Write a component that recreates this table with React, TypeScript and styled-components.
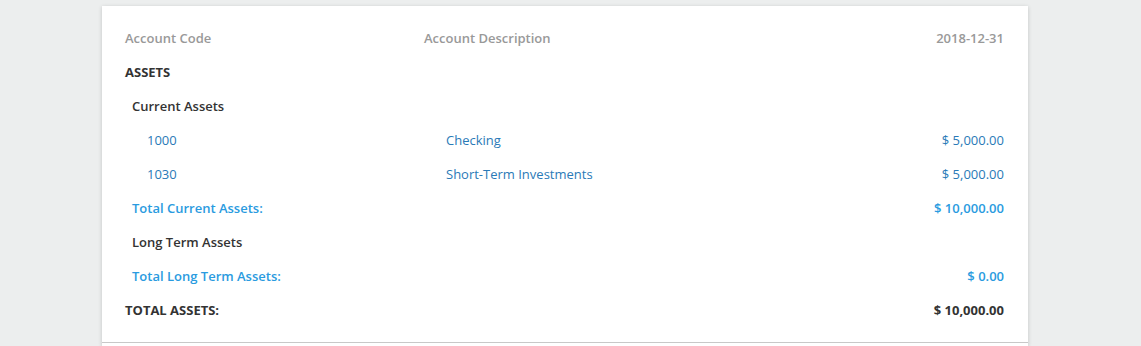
import styled, { createGlobalStyle } from 'styled-components';

const GlobalStyle = createGlobalStyle`
  body {
    margin: 0;
    background: #eceeee;
    font-family: "Open Sans", "Liberation Sans", sans-serif;
    font-size: 13px;
    color: #333;
  }
`;

const Page = styled.div`
  padding-top: 6px;
  padding-left: 102px;
`;

const Card = styled.div`
  width: 926px;
  background: #fff;
  box-shadow: 0 1px 4px rgba(0, 0, 0, 0.18);
`;

const Section = styled.div`
  padding: 15px 24px 15px 23px;
  border-bottom: 1px solid #c8c8c8;
`;

const Footer = styled.div`
  height: 3px;
`;

type Kind = 'head' | 'group' | 'sub' | 'line' | 'total' | 'grand';

const weights: Record<Kind, number> = {
  head: 600,
  group: 700,
  sub: 600,
  line: 400,
  total: 600,
  grand: 700,
};

const colors: Record<Kind, string> = {
  head: '#999',
  group: '#333',
  sub: '#333',
  line: '#2a7ab7',
  total: '#2a9be0',
  grand: '#333',
};

const Row = styled.div<{ kind: Kind }>`
  display: grid;
  grid-template-columns: 299px 1fr auto;
  align-items: center;
  height: 34px;
  font-weight: ${({ kind }) => weights[kind]};
  color: ${({ kind }) => colors[kind]};
`;

const Cell = styled.div<{ indent?: number }>`
  padding-left: ${({ indent }) => indent ?? 0}px;
  white-space: nowrap;
`;

const Amount = styled.div`
  text-align: right;
  white-space: nowrap;
`;

type Line = { code: string; name: string; amount: string };

const current: Line[] = [
  { code: '1000', name: 'Checking', amount: '$ 5,000.00' },
  { code: '1030', name: 'Short-Term Investments', amount: '$ 5,000.00' },
];

export default function App() {
  return (
    <>
      <GlobalStyle />
      <Page>
        <Card>
          <Section>
            <Row kind="head">
              <Cell>Account Code</Cell>
              <Cell>Account Description</Cell>
              <Amount>2018-12-31</Amount>
            </Row>
            <Row kind="group">
              <Cell>ASSETS</Cell>
            </Row>
            <Row kind="sub">
              <Cell indent={7}>Current Assets</Cell>
            </Row>
            {current.map((l) => (
              <Row kind="line" key={l.code}>
                <Cell indent={22}>{l.code}</Cell>
                <Cell indent={22}>{l.name}</Cell>
                <Amount>{l.amount}</Amount>
              </Row>
            ))}
            <Row kind="total">
              <Cell indent={7}>Total Current Assets:</Cell>
              <Cell />
              <Amount>$ 10,000.00</Amount>
            </Row>
            <Row kind="sub">
              <Cell indent={7}>Long Term Assets</Cell>
            </Row>
            <Row kind="total">
              <Cell indent={7}>Total Long Term Assets:</Cell>
              <Cell />
              <Amount>$ 0.00</Amount>
            </Row>
            <Row kind="grand">
              <Cell>TOTAL ASSETS:</Cell>
              <Cell />
              <Amount>$ 10,000.00</Amount>
            </Row>
          </Section>
          <Footer />
        </Card>
      </Page>
    </>
  );
}
